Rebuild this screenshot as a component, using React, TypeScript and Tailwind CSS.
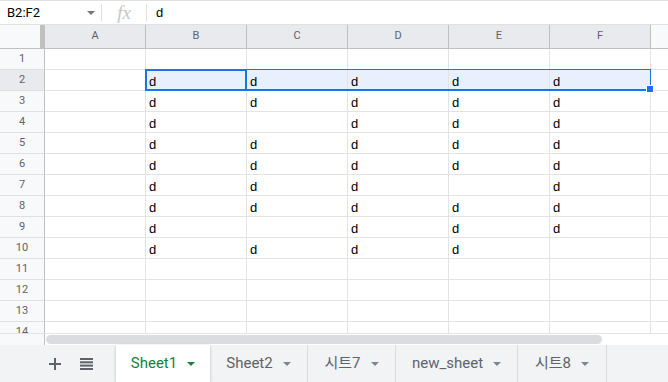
import React from "react";

const cols = ["A", "B", "C", "D", "E", "F"];
const data: Record<number, string[]> = {
  2: ["B", "C", "D", "E", "F"],
  3: ["B", "C", "D", "E", "F"],
  4: ["B", "D", "E", "F"],
  5: ["B", "C", "D", "E", "F"],
  6: ["B", "C", "D", "E", "F"],
  7: ["B", "C", "D", "F"],
  8: ["B", "C", "D", "E", "F"],
  9: ["B", "D", "E", "F"],
  10: ["B", "C", "D", "E"],
};

const rows = Array.from({ length: 14 }, (_, i) => i + 1);

function Caret({ color }: { color: string }) {
  return (
    <svg width="8" height="4" viewBox="0 0 8 4">
      <path d="M0 0 L8 0 L4 4 Z" fill={color} />
    </svg>
  );
}

const tabs = [
  { label: "Sheet1", w: "w-[94px]", active: true },
  { label: "Sheet2", w: "w-[98px]" },
  { label: "시트7", w: "w-[88px]" },
  { label: "new_sheet", w: "w-[122px]" },
  { label: "시트8", w: "w-[89px]" },
];

export default function App() {
  return (
    <div className="w-[668px] h-[382px] flex flex-col overflow-hidden bg-white font-['Liberation_Sans',Arial,sans-serif]">
      {/* formula bar */}
      <div className="h-[25px] shrink-0 border-t border-b border-[#e0e0e0] flex items-center">
        <div className="w-[101px] flex items-center justify-between pl-[7px] pr-[6px] font-['Roboto',sans-serif] text-[13px] text-black">
          <span>B2:F2</span>
          <Caret color="#777" />
        </div>
        <div className="w-px h-[17px] bg-[#e0e0e0]" />
        <div className="w-[44px] flex justify-center text-[#c4c7c5] italic font-['Liberation_Serif',serif] text-[19px] leading-[19px]">
          fx
        </div>
        <div className="w-px h-[17px] bg-[#e0e0e0]" />
        <div className="pl-[9px] text-[13px] text-black">d</div>
      </div>

      {/* grid */}
      <div className="relative h-[308px] shrink-0 overflow-hidden">
        <div className="grid grid-cols-[45px_repeat(6,101px)_1fr]">
          {/* header row */}
          <div className="h-[24px] bg-[#f8f9fa] border-b border-[#c0c0c0] flex justify-end">
            <div className="w-[5px] h-full bg-[#c0c0c0] border-r border-[#c0c0c0]" />
          </div>
          {cols.map((c) => (
            <div
              key={c}
              className="h-[24px] bg-[#e8eaed] border-r border-b border-[#c0c0c0] flex items-center justify-center font-['Roboto',sans-serif] text-[11px] text-[#5f6368]"
            >
              {c}
            </div>
          ))}
          <div className="h-[24px] bg-[#f8f9fa] border-b border-[#c0c0c0]" />

          {rows.map((r) => (
            <React.Fragment key={r}>
              <div
                className={`h-[21px] border-r border-r-[#c0c0c0] border-b border-b-[#e0e0e0] flex items-center justify-center font-['Roboto',sans-serif] text-[11px] text-[#5f6368] ${
                  r === 2 ? "bg-[#e8eaed]" : "bg-[#f8f9fa]"
                }`}
              >
                {r}
              </div>
              {cols.map((c) => (
                <div
                  key={c}
                  className={`h-[21px] border-r border-b border-[#e2e3e3] pl-[3px] pt-[3px] text-[13px] leading-[17px] text-black ${
                    r === 2 && c !== "A" ? "bg-[#e8f0fe]" : ""
                  }`}
                >
                  {data[r]?.includes(c) ? "d" : ""}
                </div>
              ))}
              <div className="h-[21px] border-b border-[#e2e3e3]" />
            </React.Fragment>
          ))}
        </div>

        {/* selection range */}
        <div className="absolute left-[145px] top-[44px] w-[506px] h-[22px] border border-[#1a73e8] border-b-2" />
        {/* active cell */}
        <div className="absolute left-[145px] top-[44px] w-[102px] h-[22px] border-2 border-[#1a73e8]" />
        {/* fill handle */}
        <div className="absolute left-[646px] top-[60px] w-[8px] h-[8px] bg-[#1a73e8] border border-white" />
      </div>

      {/* scrollbar row */}
      <div className="h-[12px] shrink-0 flex border-t border-[#e2e3e3]">
        <div className="w-[45px] h-full bg-[#f8f9fa] border-r border-[#c0c0c0]" />
        <div className="flex-1 pt-[1px] pl-[1px]">
          <div className="w-[556px] h-[9px] rounded-full bg-[#dadce0]" />
        </div>
      </div>

      {/* tab bar */}
      <div className="flex-1 bg-[#f1f3f4] flex items-stretch">
        <div className="w-[116px] flex items-center pl-[49px] gap-[19px] text-[#5f6368]">
          <svg width="12" height="12" viewBox="0 0 12 12">
            <path d="M5 0h2v5h5v2H7v5H5V7H0V5h5z" fill="#5f6368" />
          </svg>
          <svg width="13" height="12" viewBox="0 0 13 12">
            <rect x="0" y="0" width="13" height="2" fill="#5f6368" />
            <rect x="0" y="3.3" width="13" height="2" fill="#5f6368" />
            <rect x="0" y="6.6" width="13" height="2" fill="#5f6368" />
            <rect x="0" y="10" width="13" height="2" fill="#5f6368" />
          </svg>
        </div>
        {tabs.map((t) => (
          <div
            key={t.label}
            className={`${t.w} flex items-center justify-center gap-[10px] font-['Roboto','Noto_Sans_CJK_KR',sans-serif] text-[15px] font-normal ${
              t.active
                ? "bg-white text-[#188038] shadow-[0_1px_3px_rgba(60,64,67,0.3)]"
                : "text-[#5f6368] border-r border-[#dadce0]"
            }`}
          >
            <span>{t.label}</span>
            <Caret color={t.active ? "#188038" : "#80868b"} />
          </div>
        ))}
      </div>
    </div>
  );
}
